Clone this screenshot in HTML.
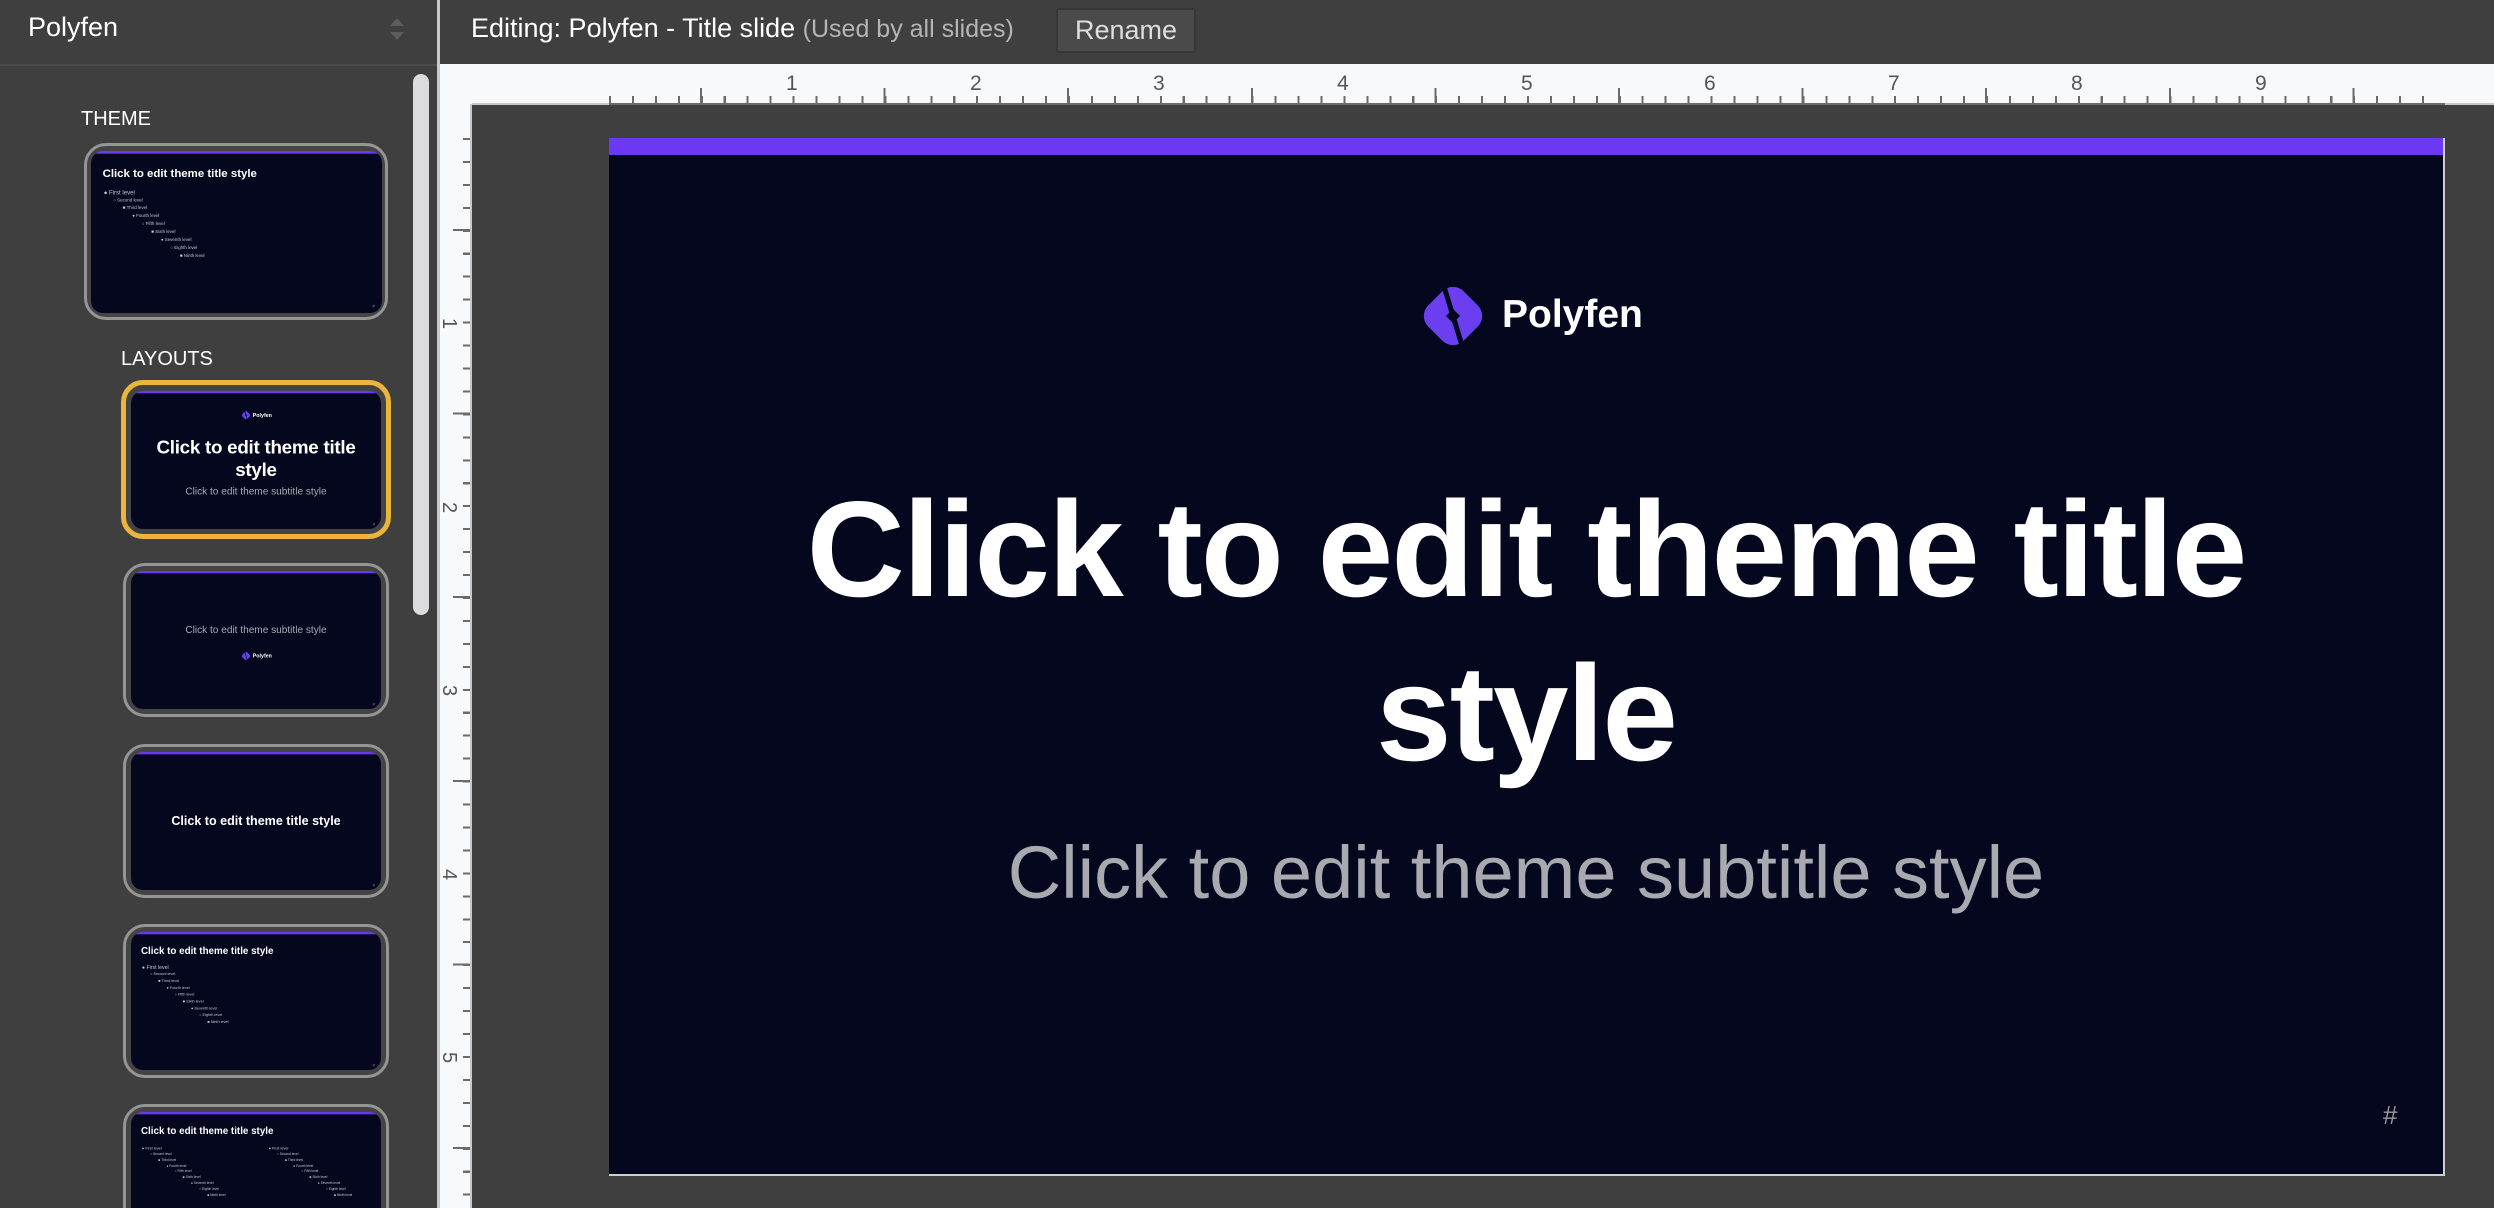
<!DOCTYPE html>
<html style="width:2494px;height:1208px;overflow:hidden"><head><meta charset="utf-8"><style>
*{margin:0;padding:0;box-sizing:border-box}
body{width:2494px;height:1208px;overflow:hidden;background:#3f3f3f;font-family:"Liberation Sans",sans-serif;position:relative}
#root{position:absolute;left:0;top:0;width:2494px;height:1208px;overflow:hidden}
.a{position:absolute}
.s{position:absolute;left:0;top:0;width:1834px;height:1036px;background:#05071f;transform-origin:0 0;overflow:hidden}
.bar{position:absolute;left:0;top:0;width:100%;height:17px;background:#6b38f5}
.ttl{position:absolute;left:0;width:100%;text-align:center;color:#fff;font-weight:bold}
.sub{position:absolute;left:0;width:100%;text-align:center;color:#a9a9b0}
.hash{position:absolute;left:1774px;top:962px;font-size:26px;color:#999}
.th{position:absolute;overflow:hidden;border-radius:12px}
.fr{position:absolute;border:3px solid #959595;border-radius:22px;background:#444}
.bl{position:absolute;color:#c8c8d0;white-space:nowrap}
</style></head><body><div id="root">
<!-- sidebar -->
<div class="a" style="left:0;top:0;width:437px;height:1208px;background:#3f3f3f"></div>
<div class="a" style="left:0;top:64px;width:437px;height:2px;background:#4b4b4b"></div>
<div class="a" style="left:28px;top:12px;font-size:27px;color:#fff">Polyfen</div>
<svg class="a" style="left:389px;top:17px" width="16" height="24"><polygon points="8,1 15,9 1,9" fill="#5c5c5c"/><polygon points="1,15 15,15 8,23" fill="#5c5c5c"/></svg>
<div class="a" style="left:413px;top:74px;width:16px;height:541px;background:#dcdcdf;border-radius:8px"></div>
<div class="a" style="left:437px;top:0;width:3px;height:1208px;background:#c9c9c9"></div>
<div class="a" style="left:81px;top:108px;font-size:20px;color:#fff">THEME</div>
<div class="a" style="left:121px;top:348px;font-size:20px;color:#fff">LAYOUTS</div>

<!-- theme thumb -->
<div class="fr" style="left:84px;top:143px;width:304px;height:177px"></div>
<div class="th" style="left:91px;top:151px;width:291px;height:162px"><div class="s" style="transform:scale(0.1587)">
<div class="bar"></div>
<div class="a" style="left:73px;top:100px;font-size:72px;font-weight:bold;color:#fff">Click to edit theme title style</div>
<div class="bl" style="left:80px;top:240px;font-size:38px">● First level</div>
<div class="bl" style="left:140px;top:292px;font-size:28px">○ Second level</div>
<div class="bl" style="left:200px;top:342px;font-size:28px">■ Third level</div>
<div class="bl" style="left:260px;top:392px;font-size:28px">● Fourth level</div>
<div class="bl" style="left:320px;top:442px;font-size:28px">○ Fifth level</div>
<div class="bl" style="left:380px;top:492px;font-size:28px">■ Sixth level</div>
<div class="bl" style="left:440px;top:542px;font-size:28px">● Seventh level</div>
<div class="bl" style="left:500px;top:592px;font-size:28px">○ Eighth level</div>
<div class="bl" style="left:560px;top:642px;font-size:28px">■ Ninth level</div>
<div class="hash">#</div></div></div>

<!-- layout 1 selected -->
<div class="fr" style="left:121px;top:380px;width:270px;height:159px;border:5px solid #ebb43c"></div>
<div class="th" style="left:131px;top:391px;width:250px;height:138px"><div class="s" style="transform:scale(0.1363)">
<div class="bar"></div>
<svg class="a" style="left:808px;top:142px" width="72" height="72" viewBox="0 0 72 72"><rect x="11" y="11" width="50" height="50" rx="15" fill="#6b3ff0" transform="rotate(45 36 36)"/><line x1="25" y1="0" x2="47" y2="72" stroke="#05071f" stroke-width="5"/><rect x="30" y="30" width="12" height="12" fill="#05071f" transform="rotate(45 36 36)"/></svg>
<div class="a" style="left:893px;top:155px;font-size:39px;font-weight:bold;color:#fff">Polyfen</div>
<div class="ttl" style="top:329px;font-size:138px;line-height:164px;letter-spacing:-2px">Click to edit theme title<br>style</div>
<div class="sub" style="top:690px;font-size:74px;line-height:90px">Click to edit theme subtitle style</div>
<div class="hash">#</div></div></div>

<!-- layout 2 -->
<div class="fr" style="left:123px;top:563px;width:266px;height:154px"></div>
<div class="th" style="left:131px;top:571px;width:250px;height:138px"><div class="s" style="transform:scale(0.1363)">
<div class="bar"></div>
<div class="sub" style="top:385px;font-size:74px;line-height:90px">Click to edit theme subtitle style</div>
<svg class="a" style="left:808px;top:588px" width="72" height="72" viewBox="0 0 72 72"><rect x="11" y="11" width="50" height="50" rx="15" fill="#6b3ff0" transform="rotate(45 36 36)"/><line x1="25" y1="0" x2="47" y2="72" stroke="#05071f" stroke-width="5"/></svg>
<div class="a" style="left:893px;top:601px;font-size:39px;font-weight:bold;color:#fff">Polyfen</div>
<div class="hash">#</div></div></div>

<!-- layout 3 -->
<div class="fr" style="left:123px;top:744px;width:266px;height:154px"></div>
<div class="th" style="left:131px;top:752px;width:250px;height:138px"><div class="s" style="transform:scale(0.1363)">
<div class="bar"></div>
<div class="ttl" style="top:450px;font-size:92px;line-height:110px">Click to edit theme title style</div>
<div class="hash">#</div></div></div>

<!-- layout 4 -->
<div class="fr" style="left:123px;top:924px;width:266px;height:154px"></div>
<div class="th" style="left:131px;top:932px;width:250px;height:138px"><div class="s" style="transform:scale(0.1363)">
<div class="bar"></div>
<div class="a" style="left:73px;top:95px;font-size:72px;font-weight:bold;color:#fff">Click to edit theme title style</div>
<div class="bl" style="left:80px;top:240px;font-size:38px">● First level</div>
<div class="bl" style="left:140px;top:292px;font-size:28px">○ Second level</div>
<div class="bl" style="left:200px;top:342px;font-size:28px">■ Third level</div>
<div class="bl" style="left:260px;top:392px;font-size:28px">● Fourth level</div>
<div class="bl" style="left:320px;top:442px;font-size:28px">○ Fifth level</div>
<div class="bl" style="left:380px;top:492px;font-size:28px">■ Sixth level</div>
<div class="bl" style="left:440px;top:542px;font-size:28px">● Seventh level</div>
<div class="bl" style="left:500px;top:592px;font-size:28px">○ Eighth level</div>
<div class="bl" style="left:560px;top:642px;font-size:28px">■ Ninth level</div>
<div class="hash">#</div></div></div>

<!-- layout 5 -->
<div class="fr" style="left:123px;top:1104px;width:266px;height:154px"></div>
<div class="th" style="left:131px;top:1112px;width:250px;height:138px"><div class="s" style="transform:scale(0.1363)">
<div class="bar"></div>
<div class="a" style="left:73px;top:95px;font-size:72px;font-weight:bold;color:#fff">Click to edit theme title style</div>
<div class="bl" style="left:80px;top:250px;font-size:28px">● First level</div>
<div class="bl" style="left:140px;top:294px;font-size:24px">○ Second level</div>
<div class="bl" style="left:200px;top:338px;font-size:24px">■ Third level</div>
<div class="bl" style="left:260px;top:382px;font-size:24px">● Fourth level</div>
<div class="bl" style="left:320px;top:420px;font-size:24px">○ Fifth level</div>
<div class="bl" style="left:380px;top:462px;font-size:24px">■ Sixth level</div>
<div class="bl" style="left:440px;top:506px;font-size:24px">● Seventh level</div>
<div class="bl" style="left:500px;top:550px;font-size:24px">○ Eighth level</div>
<div class="bl" style="left:560px;top:594px;font-size:24px">■ Ninth level</div>
<div class="bl" style="left:1010px;top:250px;font-size:28px">● First level</div>
<div class="bl" style="left:1070px;top:294px;font-size:24px">○ Second level</div>
<div class="bl" style="left:1130px;top:338px;font-size:24px">■ Third level</div>
<div class="bl" style="left:1190px;top:382px;font-size:24px">● Fourth level</div>
<div class="bl" style="left:1250px;top:420px;font-size:24px">○ Fifth level</div>
<div class="bl" style="left:1310px;top:462px;font-size:24px">■ Sixth level</div>
<div class="bl" style="left:1370px;top:506px;font-size:24px">● Seventh level</div>
<div class="bl" style="left:1430px;top:550px;font-size:24px">○ Eighth level</div>
<div class="bl" style="left:1490px;top:594px;font-size:24px">■ Ninth level</div>
</div></div>

<!-- main header -->
<div class="a" style="left:440px;top:0;width:2054px;height:64px;background:#3f3f3f"></div>
<div class="a" style="left:471px;top:13px;font-size:27px;color:#fff;white-space:nowrap">Editing: Polyfen - Title slide <span style="color:#b5b5b5;font-size:25px">(Used by all slides)</span></div>
<div class="a" style="left:1056px;top:8px;width:140px;height:45px;background:#4a4a4a;border:2px solid #373737;border-radius:3px;color:#ddd;font-size:27px;text-align:center;line-height:41px">Rename</div>

<!-- rulers -->
<div class="a" style="left:440px;top:64px;width:2054px;height:40px;background:#f8f9fb"></div>
<div class="a" style="left:440px;top:64px;width:32px;height:1144px;background:#f8f9fb"></div>
<div class="a" style="left:472px;top:103px;width:2022px;height:2px;background:#c8c8c8"></div>
<div class="a" style="left:609px;top:103px;width:1836px;height:2px;background:#6b6b6b"></div>
<div class="a" style="left:609px;top:96px;width:1836px;height:8px;background:repeating-linear-gradient(to right,#6b6b6b 0 2px,transparent 2px 22.95px)"></div>
<div class="a" style="left:700px;top:88px;width:1745px;height:16px;background:repeating-linear-gradient(to right,#6b6b6b 0 2px,transparent 2px 183.6px)"></div>
<div class="a" style="left:609px;top:72px;width:1836px;height:24px;font-size:21px;color:#555">
<span class="a" style="left:177px">1</span><span class="a" style="left:361px">2</span><span class="a" style="left:544px">3</span><span class="a" style="left:728px">4</span><span class="a" style="left:912px">5</span><span class="a" style="left:1095px">6</span><span class="a" style="left:1279px">7</span><span class="a" style="left:1462px">8</span><span class="a" style="left:1646px">9</span></div>
<div class="a" style="left:463px;top:138px;width:8px;height:1070px;background:repeating-linear-gradient(to bottom,#6b6b6b 0 2px,transparent 2px 22.95px)"></div>
<div class="a" style="left:453px;top:229px;width:18px;height:979px;background:repeating-linear-gradient(to bottom,#6b6b6b 0 2px,transparent 2px 183.6px)"></div>
<div class="a" style="left:470px;top:104px;width:2px;height:1104px;background:#c8c8c8"></div>
<div class="a" style="left:441px;top:138px;width:24px;height:1070px;font-size:20px;color:#555">
<span class="a" style="left:2px;top:174px;transform:rotate(90deg)">1</span><span class="a" style="left:2px;top:358px;transform:rotate(90deg)">2</span><span class="a" style="left:2px;top:541px;transform:rotate(90deg)">3</span><span class="a" style="left:2px;top:725px;transform:rotate(90deg)">4</span><span class="a" style="left:2px;top:908px;transform:rotate(90deg)">5</span></div>

<!-- main slide -->
<div class="a" style="left:609px;top:138px;width:1836px;height:1038px;border-right:2px solid #cfcfcf;border-bottom:2px solid #cfcfcf"></div>
<div class="s" style="left:609px;top:138px">
<div class="bar"></div>
<svg class="a" style="left:808px;top:142px" width="72" height="72" viewBox="0 0 72 72"><rect x="11" y="11" width="50" height="50" rx="15" fill="#6b3ff0" transform="rotate(45 36 36)"/><line x1="25" y1="0" x2="47" y2="72" stroke="#05071f" stroke-width="5"/><rect x="31" y="31" width="10" height="10" fill="#05071f" transform="rotate(45 36 36)"/></svg>
<div class="a" style="left:893px;top:155px;font-size:39px;font-weight:bold;color:#fff">Polyfen</div>
<div class="ttl" style="top:329px;font-size:136px;line-height:164px;letter-spacing:-2px">Click to edit theme title<br>style</div>
<div class="sub" style="top:690px;font-size:74px;line-height:90px">Click to edit theme subtitle style</div>
<div class="hash">#</div>
</div>
</div></body></html>
